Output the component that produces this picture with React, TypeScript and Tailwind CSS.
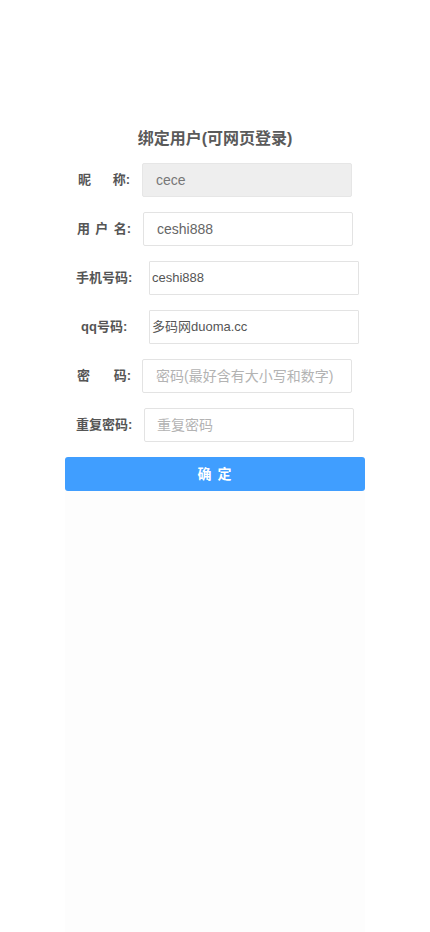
import React from "react";

const font = { fontFamily: '"Liberation Sans", "Noto Sans CJK SC", sans-serif' };

export default function App() {
  return (
    <div className="min-h-[932px] bg-white flex flex-col" style={font}>
      <div className="w-[300px] mx-auto flex flex-col flex-1">
        <div className="pt-[126px] text-center text-[16px] leading-[25px] font-bold text-[#5a5a5a]">
          绑定用户(可网页登录)
        </div>

        {/* Row 1 */}
        <div className="mt-[12px] h-[34px] flex items-center">
          <div className="ml-[13px] w-[64px] flex">
            <div className="w-[52px] flex justify-between text-[13px] font-bold text-[#555]">
              <span>昵</span>
              <span>称:</span>
            </div>
          </div>
          <div className="w-[210px] h-[34px] bg-[#eeeeee] border border-[#e6e6e6] rounded-[2px] flex items-center pl-[13px] text-[14px] text-[#777]">
            cece
          </div>
        </div>

        {/* Row 2 */}
        <div className="mt-[15px] h-[34px] flex items-center">
          <div className="ml-[12px] w-[66px] flex">
            <div className="w-[54px] flex justify-between text-[13px] font-bold text-[#555]">
              <span>用</span>
              <span>户</span>
              <span>名:</span>
            </div>
          </div>
          <div className="w-[210px] h-[34px] bg-white border border-[#e3e3e3] rounded-[2px] flex items-center pl-[13px] text-[14px] text-[#666]">
            ceshi888
          </div>
        </div>

        {/* Row 3 */}
        <div className="mt-[15px] h-[34px] flex items-center">
          <div className="ml-[11px] w-[73px] text-[13px] font-bold text-[#555]">手机号码:</div>
          <div className="w-[210px] h-[34px] bg-white border border-[#e3e3e3] rounded-[1px] flex items-center pl-[2px] text-[13px] text-[#555]">
            ceshi888
          </div>
        </div>

        {/* Row 4 */}
        <div className="mt-[15px] h-[34px] flex items-center">
          <div className="ml-[16px] w-[68px] text-[13px] font-bold text-[#555]">qq号码:</div>
          <div className="w-[210px] h-[34px] bg-white border border-[#e3e3e3] rounded-[1px] flex items-center pl-[2px] text-[13px] text-[#555]">
            多码网duoma.cc
          </div>
        </div>

        {/* Row 5 */}
        <div className="mt-[15px] h-[34px] flex items-center">
          <div className="ml-[12px] w-[65px] flex">
            <div className="w-[54px] flex justify-between text-[13px] font-bold text-[#555]">
              <span>密</span>
              <span>码:</span>
            </div>
          </div>
          <div className="w-[210px] h-[34px] bg-white border border-[#e3e3e3] rounded-[2px] flex items-center pl-[13px] text-[14px] text-[#b3b3b3]">
            密码(最好含有大小写和数字)
          </div>
        </div>

        {/* Row 6 */}
        <div className="mt-[15px] h-[34px] flex items-center">
          <div className="ml-[11px] w-[68px] text-[13px] font-bold text-[#555]">重复密码:</div>
          <div className="w-[210px] h-[34px] bg-white border border-[#e3e3e3] rounded-[2px] flex items-center pl-[12px] text-[14px] text-[#b3b3b3]">
            重复密码
          </div>
        </div>

        <div className="mt-[15px] h-[34px] bg-[#409eff] rounded-[3px] flex items-center justify-center text-white text-[14px] font-bold tracking-[1px]">
          确 定
        </div>
        <div className="flex-1 bg-[#fdfdfd]"></div>
      </div>
    </div>
  );
}
